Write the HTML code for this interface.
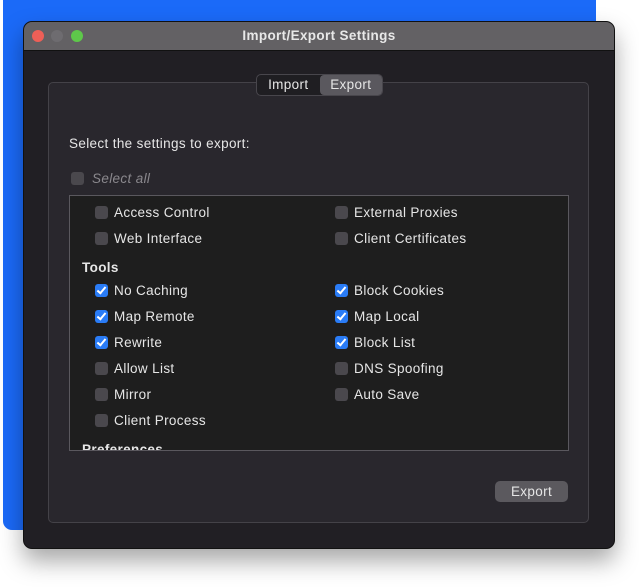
<!DOCTYPE html><html><head><style>
body{margin:0;width:639px;height:587px;background:#fff;position:relative;overflow:hidden;font-family:"Liberation Sans",sans-serif;font-size:13.5px;letter-spacing:0.35px;color:#e6e6e6}
.blue{position:absolute;left:3px;top:-10px;width:593px;height:540px;background:#1b6af8;border-radius:9px}
.win{position:absolute;left:23px;top:21px;width:592px;height:528px;background:#211f24;border-radius:9px;box-shadow:0 12px 24px rgba(0,0,0,.35);border:1px solid #111;box-sizing:border-box;overflow:hidden}
.tb{height:28px;background:#636164;border-bottom:1px solid #111;text-align:center;line-height:28px;font-weight:bold;color:#e8e8e8;font-size:13.5px}
.dot{position:absolute;top:8px;width:12px;height:12px;border-radius:50%}
.grp{position:absolute;left:24px;top:60px;width:541px;height:441px;border:1px solid #444248;border-radius:5px;background:#29272d;box-sizing:border-box}
.tabs{position:absolute;left:232px;top:52px;width:127px;height:22px;border:1px solid #48464c;border-radius:5px;background:#1f1e22;box-sizing:border-box;display:flex}
.tabs div{flex:1;text-align:center;line-height:20px}
.tabs .on{background:#5a585e;border-radius:4px}
.t{position:absolute;white-space:nowrap}
.cb{position:absolute;width:13px;height:13px;border-radius:3px;background:#4a484d}
.ck{background:#2a7cf6}
.ck::after{content:"";position:absolute;left:4px;top:1px;width:3px;height:7px;border:solid #fff;border-width:0 2px 2px 0;transform:rotate(40deg)}
.list{position:absolute;left:45px;top:173px;width:500px;height:256px;background:#1e1e1e;border:1px solid #5a585e;box-sizing:border-box;overflow:hidden}
.list .t,.list .cb{margin-top:1px}
.btn{position:absolute;left:471px;top:459px;width:73px;height:21px;background:#5b595e;border-radius:5px;text-align:center;line-height:21px}
</style></head><body>
<div class="blue"></div>
<div class="win">
<div class="tb">Import/Export Settings</div>
<div class="dot" style="left:8px;background:#ee5f57"></div>
<div class="dot" style="left:27px;background:#6e6c70"></div>
<div class="dot" style="left:47px;background:#5ec84a"></div>
<div class="grp"></div>
<div class="tabs"><div>Import</div><div class="on">Export</div></div>
<div class="t" style="left:45px;top:114px">Select the settings to export:</div>
<div class="cb" style="left:47px;top:150px"></div>
<div class="t" style="left:68px;top:149px;color:#8a888d;font-style:italic">Select all</div>
<div class="list">
<div class="cb" style="left:25px;top:9px"></div><div class="t" style="left:44px;top:8px">Access Control</div>
<div class="cb" style="left:265px;top:9px"></div><div class="t" style="left:284px;top:8px">External Proxies</div>
<div class="cb" style="left:25px;top:35px"></div><div class="t" style="left:44px;top:34px">Web Interface</div>
<div class="cb" style="left:265px;top:35px"></div><div class="t" style="left:284px;top:34px">Client Certificates</div>
<div class="t" style="left:12px;top:63px;font-weight:bold">Tools</div>
<div class="cb ck" style="left:25px;top:87px"></div><div class="t" style="left:44px;top:86px">No Caching</div>
<div class="cb ck" style="left:265px;top:87px"></div><div class="t" style="left:284px;top:86px">Block Cookies</div>
<div class="cb ck" style="left:25px;top:113px"></div><div class="t" style="left:44px;top:112px">Map Remote</div>
<div class="cb ck" style="left:265px;top:113px"></div><div class="t" style="left:284px;top:112px">Map Local</div>
<div class="cb ck" style="left:25px;top:139px"></div><div class="t" style="left:44px;top:138px">Rewrite</div>
<div class="cb ck" style="left:265px;top:139px"></div><div class="t" style="left:284px;top:138px">Block List</div>
<div class="cb" style="left:25px;top:165px"></div><div class="t" style="left:44px;top:164px">Allow List</div>
<div class="cb" style="left:265px;top:165px"></div><div class="t" style="left:284px;top:164px">DNS Spoofing</div>
<div class="cb" style="left:25px;top:191px"></div><div class="t" style="left:44px;top:190px">Mirror</div>
<div class="cb" style="left:265px;top:191px"></div><div class="t" style="left:284px;top:190px">Auto Save</div>
<div class="cb" style="left:25px;top:217px"></div><div class="t" style="left:44px;top:216px">Client Process</div>
<div class="t" style="left:12px;top:245px;font-weight:bold">Preferences</div>
</div>
<div class="btn">Export</div>
</div>
</body></html>
